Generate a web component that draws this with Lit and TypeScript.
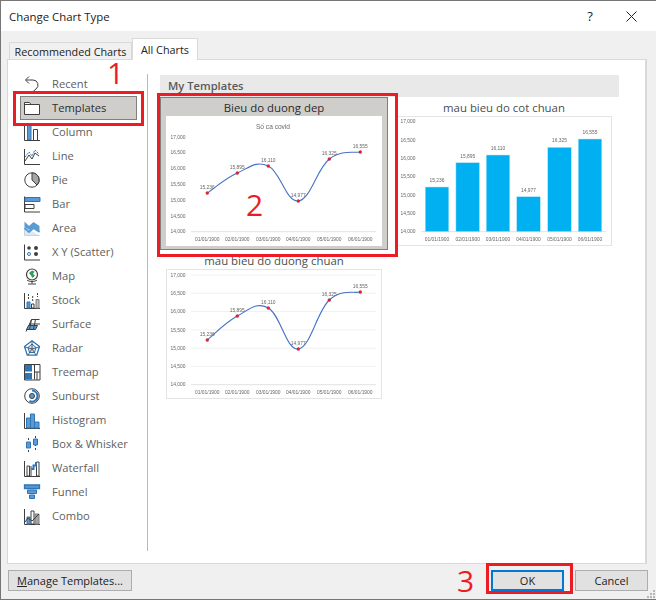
import { LitElement, html, css, svg, nothing } from "lit";
import { customElement, property } from "lit/decorators.js";

const VALUES = ["15,236", "15,895", "16,110", "14,977", "16,325", "16,555"];
const DATES = ["01/01/1900", "02/01/1900", "03/01/1900", "04/01/1900", "05/01/1900", "06/01/1900"];
const TICKS = ["17,000", "16,500", "16,000", "15,500", "15,000", "14,500", "14,000"];
const XS = [41.3, 71.3, 102.3, 132.3, 163.3, 194.3];

function smooth(p: number[][]) {
  let d = `M${p[0][0]} ${p[0][1]}`;
  for (let i = 0; i < p.length - 1; i++) {
    const a = p[Math.max(i - 1, 0)], b = p[i], c = p[i + 1], e = p[Math.min(i + 2, p.length - 1)];
    const k = 0.2;
    d += ` C${b[0] + (c[0] - a[0]) * k} ${b[1] + (c[1] - a[1]) * k} ${c[0] - (e[0] - b[0]) * k} ${c[1] - (e[1] - b[1]) * k} ${c[0]} ${c[1]}`;
  }
  return d;
}

@customElement("mini-chart")
class MiniChart extends LitElement {
  @property() kind = "line";
  @property({ type: Array }) ys: number[] = [];
  @property() heading = "";
  @property({ type: Boolean }) grid = false;
  @property({ type: Number }) top = 6;

  static styles = css`
    :host { display: block; background: #fff; }
    :host([framed]) { box-shadow: inset 0 0 0 1px #e4e4e4; }
    svg { display: block; width: 216px; height: 130px; filter: blur(0.25px); }
    text { font-family: "Liberation Sans", sans-serif; font-size: 4.9px; fill: #666; }
    .head { font-size: 6.6px; fill: #6a6a6a; }
    .g { stroke: #f1f1f1; stroke-width: 1; }
    .axis { stroke: #e2e2e2; stroke-width: 1; }
    .ln { fill: none; stroke: #4472c4; stroke-width: 1.1; }
    .dot { fill: #ed1c24; stroke: #a0304a; stroke-width: .4; }
    .bar { fill: #00b0f0; stroke: #bde8fa; stroke-width: .5; }
  `;

  render() {
    const base = 115.7;
    const step = (base - this.top) / 6;
    const bars = this.kind === "bar";
    const pts = this.ys.map((y, i) => [XS[i], y]);
    const cx = bars ? [41, 71.7, 102, 132.5, 163.5, 194] : XS;
    return html`<svg viewBox="0 0 216 130">
      ${this.heading ? svg`<text class="head" x="107" y="13" text-anchor="middle">${this.heading}</text>` : nothing}
      ${TICKS.map((t, i) => {
        const y = this.top + step * i;
        return svg`
          ${this.grid && i < 6 ? svg`<line class="g" x1="25" x2="210" y1=${y} y2=${y}></line>` : nothing}
          <text x="12" y=${y + 1.7} text-anchor="middle">${t}</text>`;
      })}
      <line class="axis" x1="25" x2="210" y1=${base} y2=${base}></line>
      ${bars
        ? this.ys.map((y, i) => svg`<rect class="bar" x=${cx[i] - 11.8} y=${y} width="23.6" height=${base - y}></rect>`)
        : svg`<path class="ln" d=${smooth(pts)}></path>
          ${pts.map((p) => svg`<circle class="dot" cx=${p[0]} cy=${p[1]} r="1.5"></circle>`)}`}
      ${this.ys.map((y, i) => svg`<text x=${cx[i]} y=${y - (bars ? 5 : 4.5)} text-anchor="middle">${VALUES[i]}</text>`)}
      ${DATES.map((d, i) => svg`<text x=${cx[i]} y="124.6" text-anchor="middle">${d}</text>`)}
    </svg>`;
  }
}

const K = "#3f3f3f";
const B = "#2e75b6";
const L = "#5b9bd5";
const ICONS: Record<string, unknown> = {
  Recent: svg`<path d="M5 .5 1.500 4l3.500 3.500M2 4h7a5 5 0 0 1 3 9l-4 3.500" fill="none" stroke=${K} stroke-width="1"/>`,
  Templates: svg`<path d="M.5 14.500v-12h5l1.500 2h8.500v10z M.5 4.500h6.500" fill="#fff" stroke=${K}/>`,
  Column: svg`<path d="M.5 1v15.500" stroke=${K}/><path d="M3.500 1.500h3.500v14.500h-3.500z" fill=${L} stroke=${B}/><path d="M9.500 5.500h4v10.500M9.500 5.500v10.500M.5 16.500h15.500" fill="none" stroke=${K}/>`,
  Line: svg`<path d="M.5 1v15.500h15.500" fill="none" stroke=${K}/><path d="M1 13l4-6 3 4 3-6 4 3" fill="none" stroke=${K}/><path d="M1 9l4-5 3 4 3-6 4 4" fill="none" stroke=${B} stroke-dasharray="2 1"/>`,
  Pie: svg`<circle cx="8" cy="8" r="7.200" fill="#fff" stroke=${K}/><path d="M8 8V1a7 7 0 0 1 5 12z" fill="#a6a6a6" stroke=${K}/>`,
  Bar: svg`<path d="M.5 .5v15.500h15.500" fill="none" stroke=${K}/><path d="M1 1.500h15v4h-15z" fill=${L} stroke=${B}/><path d="M1 8.500h9v4h-9z" fill="#fff" stroke=${K}/>`,
  Area: svg`<path d="M.500 1.500 5 6l4.500-4 6 4v6l-6-4-4.500 4-4.500-4z" fill="#5b9bd5"/><path d="M.5 7v8.500h15" fill="#dbe8f5" stroke="#d0d0d0"/><path d="M.5 8 5 12l4.500-4 6 4" fill="none" stroke="#5b9bd5" stroke-width="2"/>`,
  "X Y (Scatter)": svg`<path d="M.5 .5v15.500h15.500" fill="none" stroke=${K}/><circle cx="5" cy="4" r="1.800" fill=${K}/><circle cx="5" cy="10" r="1.500" fill="#fff" stroke=${B}/><circle cx="12" cy="4" r="2" fill=${K}/><circle cx="12" cy="10" r="2" fill=${K}/>`,
  Map: svg`<circle cx="8" cy="6.500" r="5.500" fill="#fff" stroke=${K} stroke-width="1.200"/><path d="M5 5l3-2.500 2.500 1L9 6l2 1.500L8.500 10 7 7.500z" fill="#2f9e58"/><path d="M3 12c2 2 8 2 10 0M8 13.500v2M4 16h8" fill="none" stroke=${K}/>`,
  Stock: svg`<path d="M.5 1v15.500h15.500" fill="none" stroke=${K}/><path d="M3 10h3v6h-3z" fill=${L} stroke=${B}/><path d="M7.500 12h2.500v4h-2.500z" fill="#fff" stroke=${K}/><path d="M12 7.500h3v8.500h-3z" fill="#bfbfbf" stroke="#7f7f7f"/><path d="M4.500 2v5M8.700 4v5M13.500 1v4" stroke=${K} stroke-dasharray="2 1"/>`,
  Surface: svg`<path d="M2 15.500l2.500-5 3-7h8" fill="none" stroke=${K}/><path d="M4.500 9.500h9l-2 4h-9z" fill=${L} stroke=${K}/><path d="M7.500 3.500l-2 10M11.500 3.500l-2 10M5 8h11" fill="none" stroke=${K}/>`,
  Radar: svg`<path d="M8 .800 15.500 6.500l-2.800 8.700H3.300L.5 6.500z" fill="none" stroke=${B} stroke-width="1.300"/><path d="M8 4l4 3.500-1.500 5h-5L4 7.500z" fill="#cfe2f3" stroke=${B}/><path d="M8 1v8M1 7l7 2 7-2M4 15l4-6 4 6" stroke=${K} fill="none" stroke-width=".8"/>`,
  Treemap: svg`<path d="M.5.5h15.500v15.500H.5z" fill="#fff" stroke=${K}/><path d="M1 1h7v6.500H1zM1 9h7v6.500H1z" fill=${B}/><path d="M9.500 1h1v14.500M10 8h6M13 8v8" stroke=${K} fill="none"/>`,
  Sunburst: svg`<circle cx="8" cy="8" r="7.300" fill="#fff" stroke=${K}/><path d="M8 2.500a5.500 5.500 0 0 1 5.500 5.500 5.500 5.500 0 0 1-8 5" fill="none" stroke=${B} stroke-width="2"/><circle cx="8" cy="8" r="2.500" fill=${L} stroke=${K}/>`,
  Histogram: svg`<path d="M.5 1v15.500h15.500" fill="none" stroke=${K}/><path d="M2.500 6h4v10h-4zM6.500 2h4v14h-4zM10.500 10h4.500v6h-4.500z" fill=${L} stroke=${B}/>`,
  "Box & Whisker": svg`<path d="M4.500 2v14M11.500 0v14" stroke=${K} stroke-dasharray="2 2"/><path d="M2.500 6h4v6h-4zM9.500 3h4v6h-4z" fill=${L} stroke=${B}/>`,
  Waterfall: svg`<path d="M.5 1v15.500h15.500" fill="none" stroke=${K}/><path d="M3 6h2.500v10H3zM12.500 2H15v14h-2.500z" fill="#fff" stroke=${K}/><path d="M7.500 9H9.500V5.500h2.500V2" fill="none" stroke=${B} stroke-width="2"/><path d="M7 6v10" stroke=${K}/>`,
  Funnel: svg`<path d="M.5 1h15v3.500H.5z" fill=${L} stroke=${B} stroke-width="1.300"/><path d="M3.500 6h9v3.500h-9z" fill=${L} stroke=${B}/><path d="M5.500 11h5v3.500h-5z" fill=${L} stroke=${B}/>`,
  Combo: svg`<path d="M.5 1v15.500h15.500" fill="none" stroke=${K}/><path d="M3 9h3v7H3z" fill=${L} stroke=${B}/><path d="M7 3h3v13H7z" fill="#fff" stroke=${K}/><path d="M11 6h4v10h-4z" fill="#a6a6a6" stroke="#7f7f7f"/><path d="M1 14l3-4 4 3 3-3 4-4" fill="none" stroke=${K}/>`,
};

const LINE1 = [77, 57, 50, 85, 43, 36];
const LINE2 = [71, 47, 39, 80, 31, 23];
const BARS = [71, 46.7, 39, 80.7, 31.3, 23];

@customElement("app-root")
class AppRoot extends LitElement {
  static styles = css`
    :host { display: block; width: 656px; height: 600px; overflow: hidden; font-family: "Open Sans", sans-serif; font-size: 11.2px; color: #333; }
    .win { position: relative; box-sizing: border-box; width: 656px; height: 600px; background: #f0f0f0; border: solid #767676; border-width: 1px 0 1px 1px; display: flex; flex-direction: column; }
    .title { height: 30px; background: #fff; display: flex; align-items: center; padding: 0 0 0 8px; font-size: 11.4px; color: #222; flex: none; }
    .title span { flex: 1; }
    .help { width: 30px; text-align: center; font-size: 13px; margin-right: 21px; }
    .x { display: block; margin-right: 19px; }
    .tabs { height: 28px; flex: none; display: flex; align-items: flex-end; padding-left: 8px; box-sizing: border-box; }
    .tab { box-sizing: border-box; border: 1px solid #d9d9d9; border-bottom: 0; display: flex; align-items: center; justify-content: center; color: #222; }
    .tab.a { width: 123px; height: 17px; background: #f0f0f0; font-size: 10.8px; }
    .tab.b { width: 66px; height: 22px; background: #fff; margin-bottom: -1px; position: relative; z-index: 1; font-size: 10.8px; padding-bottom: 1px; }
    .panel { box-sizing: border-box; height: 505px; width: 640px; margin-left: 6px; background: #fff; border: 2px solid #d9d9d9; border-width: 1px 2px 1px 1px; display: flex; flex: none; }
    .nav { box-sizing: border-box; width: 140px; margin: 12px 0; padding: 0 11px 0 12px; position: relative; }
    .nav::after { content: ""; position: absolute; right: 0; top: 2px; width: 1px; height: 477px; background: #b8b8b8; }
    .item { box-sizing: border-box; height: 24px; display: flex; align-items: center; gap: 11px; padding-left: 4px; color: #5f5f5f; white-space: nowrap; }
    .item span { padding-bottom: 2px; }
    .item.sel { background: #d0cecb; border: 1px solid #808080; padding-left: 3px; color: #2e2e2e; }
    .item svg { width: 17px; height: 17px; flex: none; display: block; overflow: visible; }
    .gal { padding: 15px 0 0 12px; }
    .head { width: 459px; height: 22px; background: #e9e9e9; box-sizing: border-box; padding: 0 0 2px 8px; display: flex; align-items: center; font-weight: 600; color: #595959; }
    .grid { display: grid; grid-template-columns: 228px 228px; column-gap: 2px; grid-auto-rows: 153px; }
    .tpl { box-sizing: border-box; padding: 0 5px; border: 1px solid transparent; display: flex; flex-direction: column; align-items: center; }
    .tpl.sel { background: #d0cecb; border-color: #7f7f7f; }
    .cap { height: 18px; line-height: 19px; font-size: 11.4px; color: #4d4d4d; white-space: nowrap; }
    .tpl.sel .cap { color: #2b2b2b; }
    .foot { flex: 1; position: relative; display: flex; padding: 6px 7px 0 7px; gap: 11px; }
    .btn { box-sizing: border-box; height: 21px; background: #e1e1e1; border: 1px solid #adadad; display: flex; align-items: center; justify-content: center; color: #222; flex: none; }
    .manage { width: 124px; margin-right: 348px; font-size: 11px; }
    .ok, .cancel { width: 73px; font-size: 11px; }
    .ok { border: 2px solid #0078d7; }
    .m { text-decoration: underline; }
    .grip { position: absolute; right: 1px; bottom: 1px; width: 9px; height: 9px; display: block; }
    .ann { position: absolute; box-sizing: border-box; border: 3px solid #ed1c24; pointer-events: none; }
    .a1 { left: 12px; top: 90px; width: 131px; height: 35px; }
    .a2 { left: 156px; top: 92px; width: 241px; height: 164px; }
    .a3 { left: 485px; top: 562px; width: 87px; height: 31px; }
    .n { position: absolute; color: #ed1c24; font-size: 30px; line-height: 22px; }
    .n1 { left: 106px; top: 61px; }
    .n2 { left: 245px; top: 193px; }
    .n3 { left: 456px; top: 569px; }
  `;

  render() {
    const names = Object.keys(ICONS);
    return html`<div class="win">
      <div class="title">
        <span>Change Chart Type</span>
        <div class="help">?</div>
        <svg class="x" width="11" height="11" viewBox="0 0 11 11"><path d="M.5.5l10 10M10.5.5l-10 10" stroke="#222" fill="none"/></svg>
      </div>
      <div class="tabs">
        <div class="tab a">Recommended Charts</div>
        <div class="tab b">All Charts</div>
      </div>
      <div class="panel">
        <div class="nav">
          ${names.map((n) => html`<div class="item ${n === "Templates" ? "sel" : ""}">
            <svg viewBox="0 0 17 17">${ICONS[n]}</svg><span>${n}</span>
          </div>`)}
        </div>
        <div class="gal">
          <div class="head">My Templates</div>
          <div class="grid">
            <div class="tpl sel"><div class="cap">Bieu do duong dep</div>
              <mini-chart .ys=${LINE1} top="21" heading="Số ca covid"></mini-chart></div>
            <div class="tpl"><div class="cap">mau bieu do cot chuan</div>
              <mini-chart framed kind="bar" .ys=${BARS} top="5.7"></mini-chart></div>
            <div class="tpl"><div class="cap">mau bieu do duong chuan</div>
              <mini-chart framed grid .ys=${LINE2} top="6"></mini-chart></div>
          </div>
        </div>
      </div>
      <div class="foot">
        <div class="btn manage"><span><span class="m">M</span>anage Templates...</span></div>
        <div class="btn ok">OK</div>
        <div class="btn cancel">Cancel</div>
        <svg class="grip" viewBox="0 0 9 9"><path d="M7 1h2v2H7zM4 4h2v2H4zM7 4h2v2H7zM1 7h2v2H1zM4 7h2v2H4zM7 7h2v2H7z" fill="#b8b8b8"/></svg>
      </div>
      <div class="ann a1"></div><div class="ann a2"></div><div class="ann a3"></div>
      <div class="n n1">1</div><div class="n n2">2</div><div class="n n3">3</div>
    </div>`;
  }
}
